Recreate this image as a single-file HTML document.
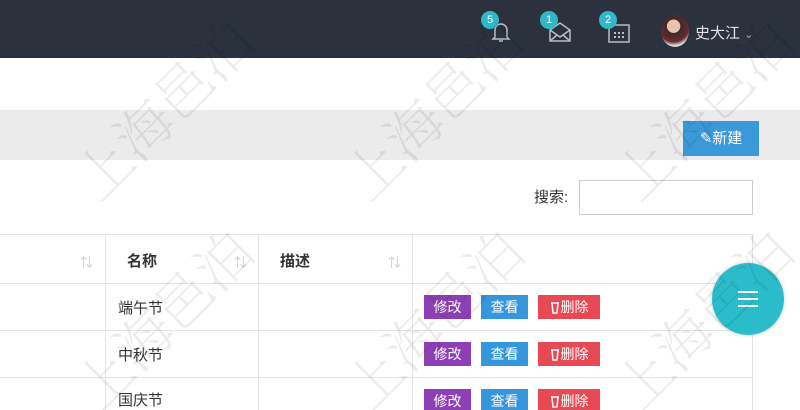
<!DOCTYPE html>
<html><head><meta charset="utf-8"><style>
html,body{margin:0;width:800px;height:410px;overflow:hidden}
body{background:#fff;font-family:"Liberation Sans","Noto Sans CJK SC",sans-serif;position:relative}
.top{position:absolute;left:0;top:0;width:800px;height:58px;background:#2b323d}
.badge{position:absolute;width:18px;height:18px;border-radius:50%;background:#2fb8c8;color:#fff;font-size:11px;text-align:center;line-height:18px}
.band{position:absolute;left:0;top:110px;width:800px;height:50px;background:#ebebeb}
.new{position:absolute;left:683px;top:121px;width:76px;height:35px;background:#3a9ad9;color:#fff;font-size:15px;line-height:35px;text-align:center}
.lbl{position:absolute;left:534px;top:186px;font-size:15px;color:#333}
.inp{position:absolute;left:579px;top:180px;width:174px;height:35px;border:1px solid #ccc;box-sizing:border-box}
.hl{position:absolute;height:1px;background:#e4e4e4;left:0;width:753px}
.vl{position:absolute;width:1px;background:#e4e4e4;top:235px;height:175px}
.th{position:absolute;top:250px;font-size:15px;font-weight:bold;color:#333}
.sort{position:absolute;top:252px;color:#ccc;font-size:13px}
.td{position:absolute;left:118px;font-size:15px;color:#333}
.b{position:absolute;height:24px;line-height:24px;color:#fff;font-size:14px;text-align:center}
.b svg{vertical-align:-2px;margin-right:1px}
.fab{position:absolute;left:712px;top:263px;width:72px;height:72px;border-radius:50%;background:#2bbccc;box-shadow:0 0 4px rgba(0,0,0,.2)}
.fab i{position:absolute;left:26px;width:20px;height:2px;background:#fff}
.wmc{position:absolute;left:0;top:0;width:800px;height:410px;overflow:hidden;pointer-events:none}
.wm{position:absolute;color:rgba(0,0,0,.08);font-size:56px;font-weight:200;transform:rotate(-45deg);white-space:nowrap;font-family:"Noto Serif CJK SC",serif;line-height:1}
</style></head><body>
<div class="top"></div>
<svg style="position:absolute;left:490px;top:20px" width="22" height="24" viewBox="0 0 22 24" fill="none" stroke="#b8bec6" stroke-width="1.5"><path d="M5 17V10a6 6 0 0112 0v7l2 2H3z M9 21h4"/></svg>
<div class="badge" style="left:481px;top:11px">5</div>
<svg style="position:absolute;left:548px;top:21px" width="24" height="22" viewBox="0 0 24 22" fill="none" stroke="#b8bec6" stroke-width="1.5"><path d="M2 9l10-7 10 7v11H2z M2 9l10 7 10-7 M2 20l7-6 M22 20l-7-6"/></svg>
<div class="badge" style="left:540px;top:11px">1</div>
<svg style="position:absolute;left:607px;top:22px" width="24" height="22" viewBox="0 0 24 22" fill="none" stroke="#b8bec6" stroke-width="1.5"><rect x="2" y="3" width="20" height="17"/><g fill="#b8bec6" stroke="none"><rect x="7" y="10" width="2" height="2"/><rect x="11" y="10" width="2" height="2"/><rect x="15" y="10" width="2" height="2"/><rect x="7" y="14" width="2" height="2"/><rect x="11" y="14" width="2" height="2"/><rect x="15" y="14" width="2" height="2"/></g></svg>
<div class="badge" style="left:599px;top:11px">2</div>
<div style="position:absolute;left:661px;top:15px;width:28px;height:32px;border-radius:50%;background:radial-gradient(circle at 45% 35%,#e8c4b0 0 25%,#3a2a2a 27%,#6b2a30 60%,#ddd 75%)"></div>
<div style="position:absolute;left:695px;top:22px;color:#e0e3e7;font-size:15px">史大江 <span style="font-size:11px;color:#aab">&#8964;</span></div>
<div class="band"></div>
<div class="new">✎新建</div>
<div class="lbl">搜索:</div><div class="inp"></div>
<div class="hl" style="top:234px"></div><div class="hl" style="top:283px"></div><div class="hl" style="top:330px"></div><div class="hl" style="top:377px"></div>
<div class="vl" style="left:105px"></div><div class="vl" style="left:258px"></div><div class="vl" style="left:412px"></div><div class="vl" style="left:752px"></div>
<div class="th" style="left:127px">名称</div><div class="th" style="left:280px">描述</div>
<div class="sort" style="left:80px">⇅</div><div class="sort" style="left:234px">⇅</div><div class="sort" style="left:388px">⇅</div>
<div class="td" style="top:297px">端午节</div><div class="td" style="top:344px">中秋节</div><div class="td" style="top:389px">国庆节</div>
<div class="b" style="left:424px;top:295px;width:47px;background:#8e3fb5">修改</div><div class="b" style="left:481px;top:295px;width:47px;background:#3596db">查看</div><div class="b" style="left:538px;top:295px;width:62px;background:#e84a55"><svg width="10" height="13" viewBox="0 0 10 13" fill="none" stroke="#fff" stroke-width="1.5"><path d="M1 2h8M2 2l1 10h4l1-10"/></svg>删除</div>
<div class="b" style="left:424px;top:342px;width:47px;background:#8e3fb5">修改</div><div class="b" style="left:481px;top:342px;width:47px;background:#3596db">查看</div><div class="b" style="left:538px;top:342px;width:62px;background:#e84a55"><svg width="10" height="13" viewBox="0 0 10 13" fill="none" stroke="#fff" stroke-width="1.5"><path d="M1 2h8M2 2l1 10h4l1-10"/></svg>删除</div>
<div class="b" style="left:424px;top:389px;width:47px;background:#8e3fb5">修改</div><div class="b" style="left:481px;top:389px;width:47px;background:#3596db">查看</div><div class="b" style="left:538px;top:389px;width:62px;background:#e84a55"><svg width="10" height="13" viewBox="0 0 10 13" fill="none" stroke="#fff" stroke-width="1.5"><path d="M1 2h8M2 2l1 10h4l1-10"/></svg>删除</div>
<div class="fab"><i style="top:28px"></i><i style="top:35px"></i><i style="top:42px"></i></div>
<div class="wmc">
<div class="wm" style="left:50px;top:80px">上海邑泊</div>
<div class="wm" style="left:320px;top:80px">上海邑泊</div>
<div class="wm" style="left:590px;top:80px">上海邑泊</div>
<div class="wm" style="left:50px;top:290px">上海邑泊</div>
<div class="wm" style="left:320px;top:290px">上海邑泊</div>
<div class="wm" style="left:590px;top:290px">上海邑泊</div>
</div>
</body></html>
